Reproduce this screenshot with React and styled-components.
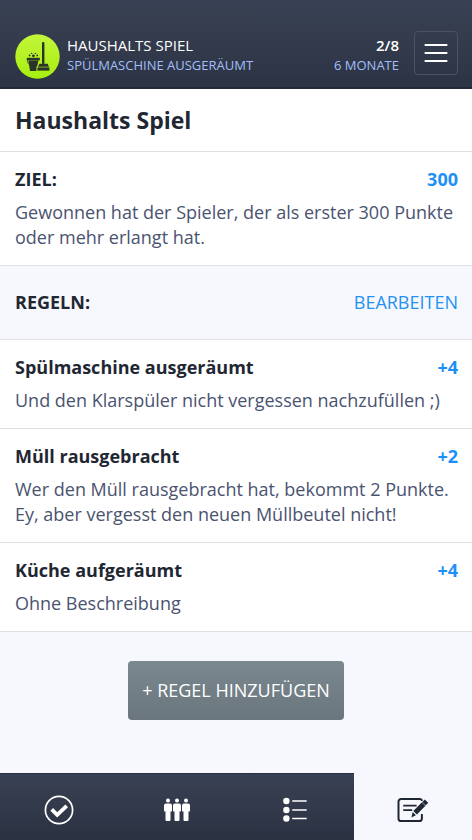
import React from "react";
import styled, { createGlobalStyle } from "styled-components";

const GlobalStyle = createGlobalStyle`
  *, *::before, *::after { box-sizing: border-box; }
  body {
    margin: 0;
    background: #f7f8fd;
    color: #1f2733;
    font-family: "Open Sans", "Noto Sans", sans-serif;
    font-size: 18px;
    line-height: 25px;
  }
  h1, h2, h3, p, ul { margin: 0; padding: 0; }
  button { font: inherit; cursor: pointer; }
`;

const Screen = styled.div`
  min-height: 100vh;
  display: flex;
  flex-direction: column;
`;

const Header = styled.header`
  display: flex;
  align-items: center;
  gap: 7px;
  min-height: 89px;
  padding: 31px 14px 8px 15px;
  border-bottom: 2px solid #23283a;
  background: linear-gradient(#394254, #2c3344);
`;

const LogoMark = styled.svg`
  flex: none;
  align-self: flex-end;
`;

const HeaderText = styled.div`
  display: flex;
  flex-direction: column;
  flex: ${({ $grow }) => ($grow ? 1 : "none")};
  text-align: ${({ $grow }) => ($grow ? "left" : "right")};
  font-size: 15px;
  line-height: 20px;
`;

const HeaderMain = styled.span`
  color: #fff;
  font-weight: ${({ $strong }) => ($strong ? 600 : 400)};
`;

const HeaderSub = styled.span`
  color: #a3bffa;
  font-size: 13px;
  font-weight: 500;
`;

const MenuButton = styled.button`
  display: flex;
  align-items: center;
  align-self: flex-start;
  justify-content: center;
  width: 44px;
  height: 44px;
  margin-left: 8px;
  padding: 0;
  color: #fff;
  background: transparent;
  border: 1px solid #4a5263;
  border-radius: 4px;
`;

const Main = styled.main`
  flex: 1;
`;

const TitleBar = styled.div`
  padding: 15px;
  background: #fff;
  border-bottom: 1px solid #dfe0e6;
`;

const Title = styled.h1`
  font-size: 23px;
  line-height: 32px;
  font-weight: 700;
`;

const Entry = styled.section`
  padding: 15px 14px 15px 15px;
  background: #fff;
  border-bottom: 1px solid #dfe0e6;
`;

const EntryHead = styled.div`
  display: flex;
  justify-content: space-between;
  gap: 16px;
  margin-bottom: 8px;
`;

const EntryTitle = styled.h2`
  font-size: 18px;
  font-weight: 700;
`;

const Points = styled.span`
  color: #1e90f5;
  font-weight: 700;
`;

const Description = styled.p`
  color: #4a5370;
`;

const RulesBar = styled.div`
  display: flex;
  align-items: center;
  justify-content: space-between;
  padding: 24px 14px 24px 15px;
  border-bottom: 1px solid #dfe0e6;
`;

const EditLink = styled.a`
  color: #2492f2;
  text-decoration: none;
`;

const AddArea = styled.div`
  display: flex;
  justify-content: center;
  padding: 29px 14px;
`;

const AddButton = styled.button`
  padding: 17px 14px;
  color: #fff;
  background: linear-gradient(#7b8890, #6a767e);
  border: 0;
  border-radius: 4px;
`;

const TabBar = styled.nav`
  display: grid;
  grid-template-columns: repeat(4, 1fr);
`;

const Tab = styled.button`
  display: flex;
  align-items: center;
  justify-content: center;
  height: 67px;
  padding: 5px 0 0;
  border: 0;
  border-top: 1px solid ${({ $active }) => ($active ? "#f7f8fd" : "#2a3040")};
  color: ${({ $active }) => ($active ? "#1f2735" : "#fff")};
  background: ${({ $active }) => ($active ? "#f7f8fd" : "linear-gradient(#384153, #2b3242)")};
`;

const Logo = () => (
  <LogoMark width="45" height="45" viewBox="0 0 45 45" role="img" aria-label="Haushalt">
    <defs>
      <linearGradient id="lime" x1="0" y1="0" x2="0" y2="1">
        <stop offset="0" stopColor="#c3f53c" />
        <stop offset="1" stopColor="#a6ef0e" />
      </linearGradient>
    </defs>
    <circle cx="22.5" cy="22.5" r="22.2" fill="url(#lime)" />
    <g fill="#2a3329">
      <rect x="27" y="8" width="2.4" height="22" rx="1" />
      <path d="M24.4 29.8h8.2l1.4 3H23z" />
      <path d="M22.4 33.4h12v3.2h-12z" />
      <path d="M11.8 23.8h13v2.6h-13z" />
      <path d="M13.4 26.4h10l-1 5.2-1 1.4v4H15z" />
      <circle cx="14.6" cy="21.4" r="0.9" />
      <circle cx="18.4" cy="21.8" r="1.4" />
      <circle cx="22.2" cy="21.4" r="0.9" />
      <circle cx="16.6" cy="19.4" r="0.7" />
      <circle cx="20.4" cy="19.4" r="0.7" />
    </g>
    <path d="M12.4 26.4c0 2 .8 3.6 2.2 4.4" fill="none" stroke="#2a3329" strokeWidth="0.7" />
  </LogoMark>
);

const MenuIcon = () => (
  <svg width="24" height="20" viewBox="0 0 24 20" fill="none" stroke="currentColor" strokeWidth="2.2" strokeLinecap="round" aria-hidden="true">
    <path d="M1.5 2h21M1.5 10h21M1.5 18h21" />
  </svg>
);

const CheckIcon = () => (
  <svg width="30" height="30" viewBox="0 0 30 30" fill="none" stroke="currentColor" aria-hidden="true">
    <circle cx="15" cy="15" r="13.6" strokeWidth="1.7" />
    <path d="M7.7 14.4l5.5 5.4L22.7 10.8" strokeWidth="3.8" />
  </svg>
);

const PeopleIcon = () => (
  <svg width="26" height="24" viewBox="0 0 26 24" fill="currentColor" aria-hidden="true">
    {[0, 9, 18].map((x) => (
      <g key={x} transform={`translate(${x} 0)`}>
        <circle cx="4" cy="2.6" r="2" />
        <path d="M2 5.6h4a2 2 0 0 1 2 2v5.2a.8.8 0 0 1-1.5.4V22a1 1 0 0 1-1 1h-3a1 1 0 0 1-1-1v-8.8A.8.8 0 0 1 0 12.8V7.6a2 2 0 0 1 2-2z" />
      </g>
    ))}
  </svg>
);

const ListIcon = () => (
  <svg width="24" height="26" viewBox="0 0 24 26" fill="currentColor" aria-hidden="true">
    {[4, 13, 21.5].map((y) => (
      <g key={y}>
        <circle cx="3.4" cy={y} r="3.2" />
        <path d={`M9.2 ${y}h14.5`} stroke="currentColor" strokeWidth="1.5" />
      </g>
    ))}
  </svg>
);

const NoteIcon = () => (
  <svg width="32" height="28" viewBox="0 0 32 28" fill="none" stroke="currentColor" aria-hidden="true">
    <path d="M23 2.9H4.2A2.7 2.7 0 0 0 1.5 5.6v16.8a2.7 2.7 0 0 0 2.7 2.7h18a2.7 2.7 0 0 0 2.7-2.7V18" strokeWidth="2" />
    <path d="M23 2.9q1.7.2 2.1 2" strokeWidth="2" />
    <path d="M6.2 9.7h13.4M6.2 14.2h9" strokeWidth="1.7" />
    <path d="M27.8 3.4l3.4 3.3-2.3 2.5-3.5-3.3zM24.7 6.6l3.5 3.4-8.3 8.5-3.6-3.4zM15.7 16l3.2 3.2-4.5 2.2z" fill="currentColor" stroke="none" />
    <path d="M25 6.4l3.4 3.3" strokeWidth="1" />
  </svg>
);

const rules = [
  { title: "Spülmaschine ausgeräumt", points: "+4", text: "Und den Klarspüler nicht vergessen nachzufüllen ;)" },
  { title: "Müll rausgebracht", points: "+2", text: "Wer den Müll rausgebracht hat, bekommt 2 Punkte. Ey, aber vergesst den neuen Müllbeutel nicht!" },
  { title: "Küche aufgeräumt", points: "+4", text: "Ohne Beschreibung" },
];

const tabs = [
  { label: "Erledigt", Icon: CheckIcon },
  { label: "Spieler", Icon: PeopleIcon },
  { label: "Liste", Icon: ListIcon },
  { label: "Regeln", Icon: NoteIcon, active: true },
];

const RuleEntry = ({ title, points, text }) => (
  <Entry>
    <EntryHead>
      <EntryTitle>{title}</EntryTitle>
      <Points>{points}</Points>
    </EntryHead>
    <Description>{text}</Description>
  </Entry>
);

export default function App() {
  return (
    <Screen>
      <GlobalStyle />
      <Header>
        <Logo />
        <HeaderText $grow>
          <HeaderMain>HAUSHALTS SPIEL</HeaderMain>
          <HeaderSub>SPÜLMASCHINE AUSGERÄUMT</HeaderSub>
        </HeaderText>
        <HeaderText>
          <HeaderMain $strong>2/8</HeaderMain>
          <HeaderSub>6 MONATE</HeaderSub>
        </HeaderText>
        <MenuButton type="button" aria-label="Menü">
          <MenuIcon />
        </MenuButton>
      </Header>
      <Main>
        <TitleBar>
          <Title>Haushalts Spiel</Title>
        </TitleBar>
        <RuleEntry
          title="ZIEL:"
          points="300"
          text="Gewonnen hat der Spieler, der als erster 300 Punkte oder mehr erlangt hat."
        />
        <RulesBar>
          <EntryTitle>REGELN:</EntryTitle>
          <EditLink href="#bearbeiten">BEARBEITEN</EditLink>
        </RulesBar>
        {rules.map((rule) => (
          <RuleEntry key={rule.title} {...rule} />
        ))}
        <AddArea>
          <AddButton type="button">+ REGEL HINZUFÜGEN</AddButton>
        </AddArea>
      </Main>
      <TabBar aria-label="Navigation">
        {tabs.map(({ label, Icon, active }) => (
          <Tab key={label} type="button" aria-label={label} aria-current={active ? "page" : undefined} $active={active}>
            <Icon />
          </Tab>
        ))}
      </TabBar>
    </Screen>
  );
}
